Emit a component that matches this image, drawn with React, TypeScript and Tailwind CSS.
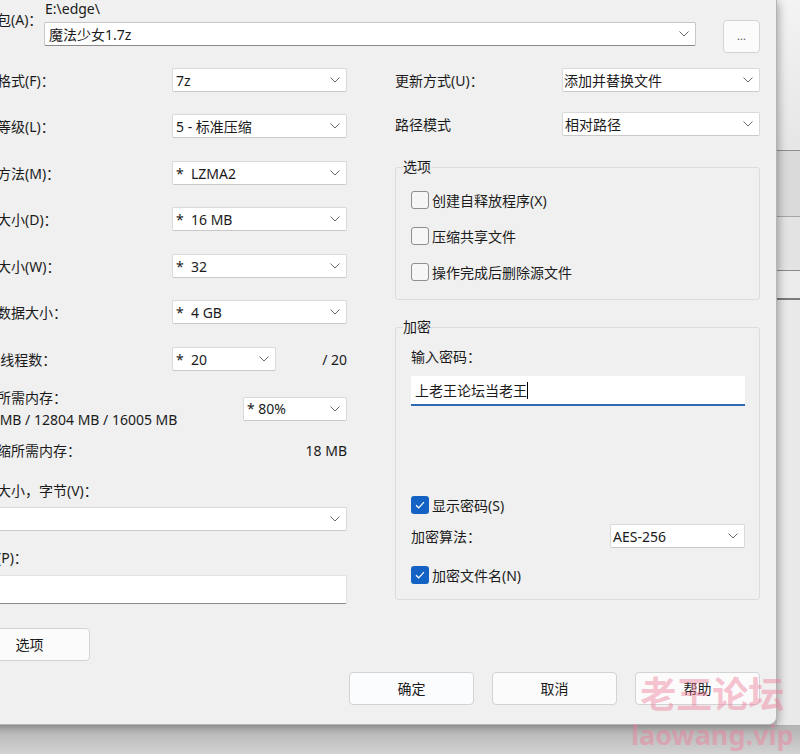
import React from "react";

const Chevron = () => (
  <svg width="10" height="6" viewBox="0 0 10 6" fill="none" className="shrink-0">
    <path d="M0.5 0.5L5 5L9.5 0.5" stroke="#6a6a6a" strokeWidth="1" />
  </svg>
);

type SelectProps = { value?: string; className?: string };

const Select = ({ value = "", className = "" }: SelectProps) => (
  <div
    className={`flex h-6 items-center justify-between rounded-[2px] border border-[#d9d9d9] border-b-[#c9c9c9] bg-white pl-[3px] pr-[6px] ${className}`}
  >
    <span className="whitespace-pre">{value}</span>
    <Chevron />
  </div>
);

const Checkbox = ({ checked = false, label }: { checked?: boolean; label: string }) => (
  <div className="flex h-[18px] items-center gap-[3px]">
    {checked ? (
      <span className="flex h-[18px] w-[18px] items-center justify-center rounded-[3px] bg-[#1463c4]">
        <svg width="10" height="8" viewBox="0 0 10 8" fill="none">
          <path d="M1 4.2L3.7 6.8L9 1.2" stroke="white" strokeWidth="1.2" />
        </svg>
      </span>
    ) : (
      <span className="h-[18px] w-[18px] rounded-[3px] border border-[#8e8e8e] bg-[#f6f6f6]" />
    )}
    <span>{label}</span>
  </div>
);

const Row = ({ label, children, className = "" }: { label: string; children: React.ReactNode; className?: string }) => (
  <div className={`flex h-6 items-center justify-between ${className}`}>
    <span className="whitespace-nowrap">{label}</span>
    {children}
  </div>
);

const Button = ({ children, className = "" }: { children: React.ReactNode; className?: string }) => (
  <div
    className={`flex h-[33px] items-center justify-center rounded-[4px] border border-[#d3d3d3] bg-[#fbfbfb] ${className}`}
  >
    {children}
  </div>
);

const App = () => {
  return (
    <div className="relative flex h-[754px] w-[800px] flex-col overflow-hidden bg-[#d0d0d0] font-['Noto_Sans','Noto_Sans_CJK_SC',sans-serif] text-[14px] text-[#1b1b1b]">
      <div className="flex h-[725px]">
        {/* Dialog */}
        <div className="relative z-10 -ml-[43px] flex h-[725px] w-[820px] shrink-0 flex-col rounded-br-[8px] border-r border-b border-[#b4b4b4] bg-[#f0f0f0] pl-[12px] pr-[16px] shadow-[2px_2px_8px_rgba(0,0,0,0.3)]">
          {/* Archive path */}
          <div className="flex">
            <span className="w-[75px] shrink-0 whitespace-nowrap pt-[11px] leading-[18px]">压缩包(A)：</span>
            <div className="flex flex-col">
              <span className="pl-[1px] leading-[18px]">E:\edge\</span>
              <div className="mt-[4px] flex items-start">
                <div className="flex h-6 w-[652px] items-center justify-between rounded-[2px] border border-[#c6c6c6] border-b-[#8a8a8a] bg-white pl-[4px] pr-[6px]">
                  <span>魔法少女1.7z</span>
                  <Chevron />
                </div>
                <Button className="ml-[27px] -mt-[2px] h-[31px] w-[37px] text-[11px] text-[#555]">...</Button>
              </div>
            </div>
          </div>

          <div className="mt-[15px] flex gap-[48px]">
            {/* Left column */}
            <div className="flex w-[378px] shrink-0 flex-col">
              <Row label="压缩格式(F)：">
                <Select value="7z" className="w-[175px]" />
              </Row>
              <Row label="压缩等级(L)：" className="mt-[22px]">
                <Select value="5 - 标准压缩" className="w-[175px]" />
              </Row>
              <Row label="压缩方法(M)：" className="mt-[23px]">
                <Select value="*  LZMA2" className="w-[175px]" />
              </Row>
              <Row label="字典大小(D)：" className="mt-[22px]">
                <Select value="*  16 MB" className="w-[175px]" />
              </Row>
              <Row label="单词大小(W)：" className="mt-[23px]">
                <Select value="*  32" className="w-[175px]" />
              </Row>
              <Row label="固实数据大小：" className="mt-[22px]">
                <Select value="*  4 GB" className="w-[175px]" />
              </Row>
              <Row label="CPU 线程数：" className="mt-[23px]">
                <div className="flex w-[175px] items-center justify-between">
                  <Select value="*  20" className="w-[104px]" />
                  <span>/ 20</span>
                </div>
              </Row>
              <div className="mt-[16px] flex items-center justify-between leading-[22px]">
                <div className="flex flex-col whitespace-nowrap">
                  <span>压缩所需内存：</span>
                  <span className="-ml-[5px]">3654 MB / 12804 MB / 16005 MB</span>
                </div>
                <Select value="* 80%" className="w-[104px]" />
              </div>
              <div className="mt-[9px] flex justify-between leading-[22px]">
                <span>解压缩所需内存：</span>
                <span>18 MB</span>
              </div>
              <span className="mt-[18px] leading-[22px]">分卷大小，字节(V)：</span>
              <Select className="mt-[5px] w-full" />
              <span className="mt-[16px] leading-[22px]">参数(P)：</span>
              <div className="mt-[6px] h-[29px] rounded-[2px] border border-[#e2e2e2] border-b-[#8c8c8c] bg-white" />
              <Button className="mt-[24px] w-[121px]">选项</Button>
            </div>

            {/* Right column */}
            <div className="flex w-[365px] shrink-0 flex-col">
              <Row label="更新方式(U)：">
                <Select value="添加并替换文件" className="w-[198px] !pl-[1px]" />
              </Row>
              <Row label="路径模式" className="mt-[20px]">
                <Select value="相对路径" className="w-[198px] !pl-[2px]" />
              </Row>

              <fieldset className="mt-[21px] rounded-[3px] border border-[#dcdcdc] p-0">
                <legend className="ml-[7px] px-0 leading-[20px]">选项</legend>
                <div className="flex flex-col gap-[18px] pt-[14px] pb-[18px] pl-[15px]">
                  <Checkbox label="创建自释放程序(X)" />
                  <Checkbox label="压缩共享文件" />
                  <Checkbox label="操作完成后删除源文件" />
                </div>
              </fieldset>

              <fieldset className="mt-[17px] rounded-[3px] border border-[#dcdcdc] p-0">
                <legend className="ml-[7px] px-0 leading-[20px]">加密</legend>
                <div className="flex flex-col pt-[10px] pb-[15px] pl-[15px] pr-[14px]">
                  <span className="leading-[20px]">输入密码：</span>
                  <div className="mt-[9px] flex h-[30px] items-center border-b-2 border-[#2d6bb3] bg-white pl-[4px]">
                    <span>上老王论坛当老王</span>
                    <span className="inline-block h-[17px] w-px bg-black" />
                  </div>
                  <div className="mt-[90px]">
                    <Checkbox checked label="显示密码(S)" />
                  </div>
                  <Row label="加密算法：" className="mt-[10px]">
                    <Select value="AES-256" className="w-[135px] !pl-[2px]" />
                  </Row>
                  <div className="mt-[18px]">
                    <Checkbox checked label="加密文件名(N)" />
                  </div>
                </div>
              </fieldset>
            </div>
          </div>

          {/* Dialog buttons */}
          <div className="mt-[11px] flex justify-end gap-[18px]">
            <Button className="w-[125px] border-[#5f93c6] bg-[#fbfcfe]">确定</Button>
            <Button className="w-[125px]">取消</Button>
            <Button className="w-[125px]">帮助</Button>
          </div>
        </div>

        {/* Background window strip */}
        <div className="flex flex-1 flex-col">
          <div className="h-[150px] bg-linear-to-b from-[#f3f3f3] to-[#e6e6e6]" />
          <div className="h-[66px] border-t border-[#8f8f8f] bg-[#dadada]" />
          <div className="h-[54px] border-t border-[#a6a6a6] bg-[#e3e3e3]" />
          <div className="h-[28px] border-t border-[#8a8a8a] bg-[#ececec]" />
          <div className="flex-1 border-t-2 border-[#7a7a7a] bg-[#e9e9e9]" />
        </div>
      </div>
      <div className="h-[29px] bg-linear-to-b from-[#b2b2b2] to-[#d2d2d2]" />

      {/* Watermark */}
      <div className="pointer-events-none absolute left-[631px] top-[673px] z-20 flex flex-col items-center font-bold text-[#ee7d98]/45">
        <span className="text-[36px] leading-[44px]">老王论坛</span>
        <span className="mt-[1px] font-['Noto_Sans',sans-serif] text-[27px] leading-[34px]">laowang.vip</span>
      </div>
    </div>
  );
};

export default App;
